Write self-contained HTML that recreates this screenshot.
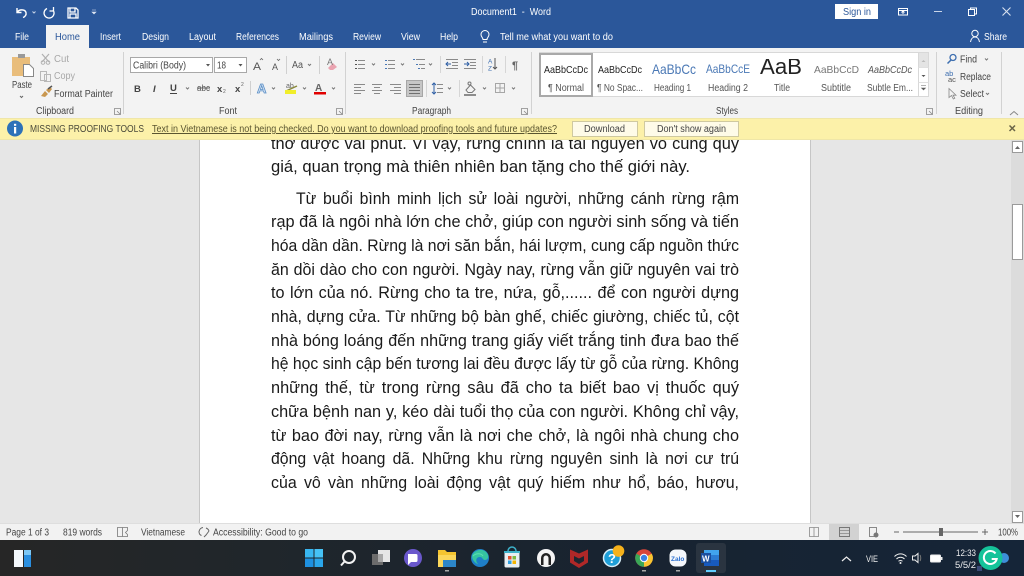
<!DOCTYPE html>
<html><head><meta charset="utf-8"><title>Document1 - Word</title>
<style>
html,body{margin:0;padding:0;width:1024px;height:576px;overflow:hidden;background:#e6e6e6}
svg{display:block;position:absolute;left:0;top:0;filter:blur(.35px)}
text{font-family:"Liberation Sans",sans-serif;white-space:pre}
.d{font-size:17px;fill:#1a1a1a}
.w{font-size:10px;fill:#fff}
.r{font-size:10px;fill:#444}
.g{font-size:10px;fill:#a8a8a8}
.s{font-size:10px;fill:#555}
.st{font-size:10px;fill:#444}
</style></head><body>
<svg width="1024" height="576" viewBox="0 0 1024 576" xmlns="http://www.w3.org/2000/svg">
<rect width="1024" height="576" fill="#e6e6e6"/>
<!-- page -->
<rect x="200" y="130" width="610" height="394" fill="#fff"/>
<path d="M199.500 130V524M810.500 130V524" stroke="#c6c6c6"/>
<text class="d" x="271" y="149" textLength="468" lengthAdjust="spacingAndGlyphs" word-spacing=".5">thơ được vài phút. Vì vậy, rừng chính là tài nguyên vô cùng quý</text>
<text class="d" x="271" y="172" textLength="419" lengthAdjust="spacingAndGlyphs">giá, quan trọng mà thiên nhiên ban tặng cho thế giới này.</text>
<text class="d" x="296" y="204" textLength="443" lengthAdjust="spacingAndGlyphs" word-spacing="2.500">Từ buổi bình minh lịch sử loài người, những cánh rừng rậm</text>
<text class="d" x="271" y="227" textLength="468" lengthAdjust="spacingAndGlyphs">rạp đã là ngôi nhà lớn che chở, giúp con người sinh sống và tiến</text>
<text class="d" x="271" y="251" textLength="468" lengthAdjust="spacingAndGlyphs">hóa dần dần. Rừng là nơi săn bắn, hái lượm, cung cấp nguồn thức</text>
<text class="d" x="271" y="275" textLength="468" lengthAdjust="spacingAndGlyphs" word-spacing=".5">ăn dồi dào cho con người. Ngày nay, rừng vẫn giữ nguyên vai trò</text>
<text class="d" x="271" y="298" textLength="468" lengthAdjust="spacingAndGlyphs" word-spacing="1">to lớn của nó. Rừng cho ta tre, nứa, gỗ,...... để con người dựng</text>
<text class="d" x="271" y="322" textLength="468" lengthAdjust="spacingAndGlyphs" word-spacing=".5">nhà, dựng cửa. Từ những bộ bàn ghế, chiếc giường, chiếc tủ, cột</text>
<text class="d" x="271" y="346" textLength="468" lengthAdjust="spacingAndGlyphs" word-spacing=".5">nhà bóng loáng đến những trang giấy viết trắng tinh đưa bao thế</text>
<text class="d" x="271" y="369" textLength="468" lengthAdjust="spacingAndGlyphs">hệ học sinh cập bến tương lai đều được lấy từ gỗ của rừng. Không</text>
<text class="d" x="271" y="393" textLength="468" lengthAdjust="spacingAndGlyphs" word-spacing="2.500">những thế, từ trong rừng sâu đã cho ta biết bao vị thuốc quý</text>
<text class="d" x="271" y="417" textLength="468" lengthAdjust="spacingAndGlyphs" word-spacing=".3">chữa bệnh nan y, kéo dài tuổi thọ của con người. Không chỉ vậy,</text>
<text class="d" x="271" y="441" textLength="468" lengthAdjust="spacingAndGlyphs" word-spacing="1">từ bao đời nay, rừng vẫn là nơi che chở, là ngôi nhà chung cho</text>
<text class="d" x="271" y="464" textLength="468" lengthAdjust="spacingAndGlyphs" word-spacing="3">động vật hoang dã. Những khu rừng nguyên sinh là nơi cư trú</text>
<text class="d" x="271" y="488" textLength="468" lengthAdjust="spacingAndGlyphs" word-spacing="3">của vô vàn những loài động vật quý hiếm như hổ, báo, hươu,</text>
<!-- scrollbar -->
<rect x="1011" y="140" width="13" height="384" fill="#dcdcdc"/>
<rect x="1012.500" y="141.500" width="10" height="11" fill="#fff" stroke="#9a9a9a"/>
<path d="M1015 149l2.500-3 2.500 3z" fill="#666"/>
<rect x="1012.500" y="204.500" width="10" height="55" fill="#fff" stroke="#9a9a9a"/>
<rect x="1012.500" y="511.500" width="10" height="11" fill="#fff" stroke="#9a9a9a"/>
<path d="M1015 515l2.500 3 2.500-3z" fill="#666"/>

<!-- title bar -->
<rect width="1024" height="48" fill="#2b579a"/>
<path d="M17 8v4.500h4.500M17 12.500c2-3.500 8-3.500 9 0 .6 2.400-1 4.300-3 5" fill="none" stroke="#fff" stroke-width="1.400"/>
<path d="M32.500 11.500l1.500 1.500 1.500-1.500" fill="none" stroke="#c9d5e8"/>
<path d="M47 8.500a5 5 0 1 0 6 1.500M53.500 7v4h-4" fill="none" stroke="#fff" stroke-width="1.300"/>
<path d="M68 8h8l2 2v8h-10zM70 8v4h5V8M70 18v-4h6v4" fill="none" stroke="#fff" stroke-width="1.300"/>
<path d="M92 10h4M92 12h4l-2 2z" fill="#dfe6f2" stroke="#dfe6f2" stroke-width=".6"/>
<text x="471" y="15" class="w" textLength="80" lengthAdjust="spacingAndGlyphs">Document1  -  Word</text>
<rect x="835" y="4" width="43" height="15" fill="#fff"/>
<text x="843" y="15" font-size="10" fill="#2b579a" textLength="28" lengthAdjust="spacingAndGlyphs">Sign in</text>
<path d="M898.500 8.500h9v6.500h-9zM898.500 10.500h9M903 14v-3M901.500 12.500l1.500-1.500 1.500 1.500" fill="none" stroke="#fff"/>
<path d="M934 11.500h8" stroke="#c9d5e8"/>
<path d="M968.500 9.500h6v6h-6zM970.500 9.500v-1.500h6v6h-1.500" fill="none" stroke="#fff"/>
<path d="M1002.500 7.500l8 8M1010.500 7.500l-8 8" stroke="#d8e1ef" stroke-width="1.100"/>
<!-- tabs -->
<rect x="46" y="25" width="43" height="23" fill="#f3f3f3"/>
<text x="15" y="40" class="w" textLength="14" lengthAdjust="spacingAndGlyphs">File</text>
<text x="55" y="40" font-size="10" fill="#2b579a" textLength="25" lengthAdjust="spacingAndGlyphs">Home</text>
<text x="100" y="40" class="w" textLength="21" lengthAdjust="spacingAndGlyphs">Insert</text>
<text x="142" y="40" class="w" textLength="27" lengthAdjust="spacingAndGlyphs">Design</text>
<text x="189" y="40" class="w" textLength="27" lengthAdjust="spacingAndGlyphs">Layout</text>
<text x="236" y="40" class="w" textLength="43" lengthAdjust="spacingAndGlyphs">References</text>
<text x="299" y="40" class="w" textLength="34" lengthAdjust="spacingAndGlyphs">Mailings</text>
<text x="353" y="40" class="w" textLength="28" lengthAdjust="spacingAndGlyphs">Review</text>
<text x="401" y="40" class="w" textLength="19" lengthAdjust="spacingAndGlyphs">View</text>
<text x="440" y="40" class="w" textLength="18" lengthAdjust="spacingAndGlyphs">Help</text>
<path d="M483 42h4M483 39.500c0-2-2-2.500-2-5a4 4 0 0 1 8 0c0 2.500-2 3-2 5z" fill="none" stroke="#fff"/>
<text x="500" y="40" class="w" textLength="113" lengthAdjust="spacingAndGlyphs">Tell me what you want to do</text>
<circle cx="975" cy="33.500" r="3.200" fill="none" stroke="#fff"/>
<path d="M970.500 42c.5-3.500 2.500-5 4.500-5s4 1.500 4.500 5" fill="none" stroke="#fff"/>
<text x="984" y="40" class="w" textLength="23" lengthAdjust="spacingAndGlyphs">Share</text>

<!-- ribbon -->
<rect y="48" width="1024" height="70" fill="#f3f3f3"/>
<path d="M123.500 52V114M345.500 52V114M531.500 52V114M936.500 52V114M1001.500 52V114" stroke="#d2d2d2"/>
<!-- clipboard -->
<rect x="12" y="57" width="18" height="19" fill="#e9bd7b"/>
<rect x="18" y="54" width="7" height="4" fill="#999"/>
<path d="M23.500 64.500h6l4 4v8h-10z" fill="#fff" stroke="#888"/>
<text x="12" y="88" class="r" textLength="20" lengthAdjust="spacingAndGlyphs">Paste</text>
<path d="M20 96l1.500 1.500 1.500-1.500" fill="none" stroke="#666"/>
<path d="M42 54l7 8M49 54l-7 8" stroke="#b0b0b0" stroke-width="1.200"/><circle cx="43" cy="62.500" r="1.800" fill="none" stroke="#b0b0b0"/><circle cx="48" cy="62.500" r="1.800" fill="none" stroke="#b0b0b0"/>
<text x="54" y="62" class="g" textLength="15" lengthAdjust="spacingAndGlyphs">Cut</text>
<path d="M40.500 71.500h6v9h-6zM44.500 74.500h6v7h-6z" fill="#f3f3f3" stroke="#b8b8b8"/>
<text x="54" y="79" class="g" textLength="21" lengthAdjust="spacingAndGlyphs">Copy</text>
<path d="M41 96l4-5 3 3-3 3zM46 90l4-3 2 2-3 4z" fill="#c9974f"/><path d="M48 89l4-3" stroke="#555" stroke-width="1.500"/>
<text x="54" y="97" class="r" textLength="59" lengthAdjust="spacingAndGlyphs">Format Painter</text>
<text x="36" y="114" class="r" textLength="38" lengthAdjust="spacingAndGlyphs">Clipboard</text>
<path d="M114.500 108.500h6v6h-6zM117 111l3 3" fill="none" stroke="#888" stroke-width=".8"/>
<!-- font -->
<rect x="130.500" y="57.500" width="82" height="15" fill="#fff" stroke="#a8a8a8"/>
<text x="133" y="68.500" class="r" textLength="53" lengthAdjust="spacingAndGlyphs">Calibri (Body)</text>
<path d="M206 64h4l-2 2.500z" fill="#555"/>
<rect x="214.500" y="57.500" width="32" height="15" fill="#fff" stroke="#a8a8a8"/>
<text x="217" y="68.500" class="r" textLength="9" lengthAdjust="spacingAndGlyphs">18</text>
<path d="M238.500 64h4l-2 2.500z" fill="#555"/>
<text x="253" y="70" font-size="11" fill="#555" textLength="8" lengthAdjust="spacingAndGlyphs">A</text><path d="M260 60l1.500-1.500 1.500 1.500" fill="none" stroke="#666" stroke-width=".8"/>
<text x="272" y="70" font-size="9" fill="#555" textLength="6" lengthAdjust="spacingAndGlyphs">A</text><path d="M277 59l1.500 1.500 1.500-1.500" fill="none" stroke="#666" stroke-width=".8"/>
<path d="M286.500 56V74" stroke="#d0d0d0"/>
<text x="292" y="68" font-size="10" fill="#555" textLength="11" lengthAdjust="spacingAndGlyphs">Aa</text>
<path d="M308 64l1.500 1.500 1.500-1.500" fill="none" stroke="#777"/>
<path d="M319.500 56V74" stroke="#d0d0d0"/>
<path d="M328 68l5-5 4 4-4 3h-3z" fill="#eaa3b0"/><text x="327" y="65" font-size="9" fill="#777">A</text>
<text x="134" y="92" font-size="9.500" font-weight="bold" fill="#444">B</text>
<text x="153" y="92" font-size="9.500" font-style="italic" font-weight="bold" font-family="Liberation Serif" fill="#444">I</text>
<text x="170" y="91" font-size="9.500" font-weight="bold" fill="#444">U</text><path d="M170 93.500h7" stroke="#444"/>
<path d="M186 87.500l1.500 1.500 1.500-1.500" fill="none" stroke="#777"/>
<text x="197" y="91" font-size="9" fill="#555" textLength="13" lengthAdjust="spacingAndGlyphs">abc</text><path d="M197 88h13" stroke="#666"/>
<text x="217" y="92" font-size="9.500" font-weight="bold" fill="#444">x</text><text x="223" y="93" font-size="5" fill="#666">2</text>
<text x="235" y="92" font-size="9.500" font-weight="bold" fill="#444">x</text><text x="241" y="86" font-size="5" fill="#666">2</text>
<path d="M250.500 81V95" stroke="#d0d0d0"/>
<text x="257" y="93" font-size="13" font-weight="bold" fill="#d5e3f2" stroke="#5b8fc7" stroke-width=".8">A</text>
<path d="M272 87.500l1.500 1.500 1.500-1.500" fill="none" stroke="#777"/>
<text x="286" y="88" font-size="7" fill="#666">ab</text><path d="M286 91l11-5" stroke="#8a8a3a" stroke-width="1.500"/><rect x="285" y="90" width="11" height="4" fill="#f1ee2a"/>
<path d="M303 87.500l1.500 1.500 1.500-1.500" fill="none" stroke="#777"/>
<text x="315" y="91" font-size="10" fill="#666" font-weight="bold">A</text><rect x="314" y="92" width="12" height="2.500" fill="#e00000"/>
<path d="M332 87.500l1.500 1.500 1.500-1.500" fill="none" stroke="#777"/>
<text x="219" y="114" class="r" textLength="18" lengthAdjust="spacingAndGlyphs">Font</text>
<path d="M336.500 108.500h6v6h-6zM339 111l3 3" fill="none" stroke="#888" stroke-width=".8"/>
<!-- paragraph -->
<g fill="none" stroke="#8a8a8a">
<!-- bullets -->
<path d="M358 60.500h7M358 64.500h7M358 68.500h7"/>
<path d="M355 60.500h2M355 64.500h2M355 68.500h2" stroke="#555"/>
<path d="M372 63.500l1.500 1.500 1.500-1.500" stroke="#777"/>
<!-- numbering -->
<path d="M388 60.500h7M388 64.500h7M388 68.500h7"/>
<path d="M385 60.500h2M385 64.500h2M385 68.500h2" stroke="#4a78b5"/>
<path d="M401 63.500l1.500 1.500 1.500-1.500" stroke="#777"/>
<!-- multilevel -->
<path d="M416 59.500h9M419 64.500h6M421 68.500h4"/>
<path d="M413 59.500h2M416 64.500h2M418 68.500h2" stroke="#4a78b5"/>
<path d="M429 63.500l1.500 1.500 1.500-1.500" stroke="#777"/>
<!-- indents -->
<path d="M446 59.500h12M452 62.500h6M452 65.500h6M446 68.500h12"/>
<path d="M451 64h-5M448 62l-2 2 2 2" stroke="#2f5fa5"/>
<path d="M464 59.500h12M470 62.500h6M470 65.500h6M464 68.500h12"/>
<path d="M464 64h5M467 62l2 2-2 2" stroke="#2f5fa5"/>
<!-- aligns -->
<path d="M354 84.500h11M354 87.500h7M354 90.500h11M354 93.500h7"/>
<path d="M372 84.500h10M374 87.500h6M372 90.500h10M374 93.500h6"/>
<path d="M390 84.500h11M394 87.500h7M390 90.500h11M394 93.500h7"/>
<!-- line spacing -->
<path d="M437 84.500h6M437 88.500h6M437 92.500h6"/>
<path d="M434 83v11M432 85l2-2 2 2M432 92l2 2 2-2" stroke="#2f5fa5"/>
<path d="M448 87.500l1.500 1.500 1.500-1.500" stroke="#777"/>
<!-- shading, borders -->
<path d="M466 90l4.500-5 4.500 4.500-3 3h-4z" stroke="#777" fill="#f3f3f3"/>
<circle cx="469.500" cy="83.500" r="1.500" stroke="#777"/>
<path d="M483 87.500l1.500 1.500 1.500-1.500" stroke="#777"/>
<path d="M495.500 83.500h9v9h-9zM500 83.500v9M495.500 88h9" stroke="#a6a6a6"/>
<path d="M512 87.500l1.500 1.500 1.500-1.500" stroke="#777"/>
<!-- seps -->
<path d="M440.500 56V73M482.500 56V73M505.500 56V73M426.500 80V97M459.500 80V97" stroke="#d6d6d6"/>
<!-- sort -->
<path d="M495 58v11M493 67l2 2 2-2" stroke="#555"/>
</g>
<rect x="464" y="94" width="12" height="2" fill="#8c8c8c"/>
<rect x="406.500" y="80.500" width="16" height="16" fill="#c6c6c6" stroke="#a6a6a6"/>
<path d="M409 84.500h11M409 87.500h11M409 90.500h11M409 93.500h11" stroke="#707070"/>
<text x="488" y="63.500" font-size="6.500" fill="#3e6fb0">A</text><text x="488" y="70.500" font-size="6.500" fill="#3e6fb0">Z</text>
<text x="512" y="69" font-size="11" fill="#666" font-weight="bold">¶</text>
<text x="412" y="114" class="r" textLength="39" lengthAdjust="spacingAndGlyphs">Paragraph</text>
<path d="M521.500 108.500h6v6h-6zM524 111l3 3" fill="none" stroke="#888" stroke-width=".8"/>
<!-- styles -->
<rect x="539.500" y="52.500" width="389" height="44" fill="#fff" stroke="#d8d8d8"/>
<rect x="540" y="54" width="52" height="42" fill="#fff" stroke="#a9a9a9" stroke-width="2"/>
<text x="544" y="73" font-size="10.500" fill="#222" textLength="44" lengthAdjust="spacingAndGlyphs">AaBbCcDc</text>
<text x="548" y="91" class="s" textLength="36" lengthAdjust="spacingAndGlyphs">¶ Normal</text>
<text x="598" y="73" font-size="10.500" fill="#222" textLength="44" lengthAdjust="spacingAndGlyphs">AaBbCcDc</text>
<text x="597" y="91" class="s" textLength="46" lengthAdjust="spacingAndGlyphs">¶ No Spac...</text>
<text x="652" y="74" font-size="14" fill="#4a78b5" textLength="44" lengthAdjust="spacingAndGlyphs">AaBbCc</text>
<text x="654" y="91" class="s" textLength="37" lengthAdjust="spacingAndGlyphs">Heading 1</text>
<text x="706" y="73" font-size="12" fill="#4a78b5" textLength="44" lengthAdjust="spacingAndGlyphs">AaBbCcE</text>
<text x="708" y="91" class="s" textLength="40" lengthAdjust="spacingAndGlyphs">Heading 2</text>
<text x="760" y="74" font-size="22" fill="#222" textLength="42" lengthAdjust="spacingAndGlyphs">AaB</text>
<rect x="755" y="53" width="50" height="6" fill="#fff"/>
<text x="774" y="91" class="s" textLength="16" lengthAdjust="spacingAndGlyphs">Title</text>
<text x="814" y="73" font-size="10.500" fill="#777" textLength="45" lengthAdjust="spacingAndGlyphs">AaBbCcD</text>
<text x="821" y="91" class="s" textLength="30" lengthAdjust="spacingAndGlyphs">Subtitle</text>
<text x="868" y="73" font-size="10.500" font-style="italic" fill="#555" textLength="44" lengthAdjust="spacingAndGlyphs">AaBbCcDc</text>
<text x="867" y="91" class="s" textLength="46" lengthAdjust="spacingAndGlyphs">Subtle Em...</text>
<rect x="918.500" y="52.500" width="10" height="44" fill="#fff" stroke="#d8d8d8"/>
<rect x="919" y="53" width="9" height="14" fill="#e4e4e4"/>
<path d="M921.500 62l2-2 2 2z" fill="#bbb"/><path d="M921.500 75l2 2 2-2z" fill="#555"/>
<path d="M921 85.500h5M921.500 88l2 2 2-2z" stroke="#666" fill="#555" stroke-width=".6"/>
<path d="M918.500 67.500h10M918.500 82.500h10" stroke="#e0e0e0"/>
<text x="716" y="114" class="r" textLength="22" lengthAdjust="spacingAndGlyphs">Styles</text>
<path d="M926.500 108.500h6v6h-6zM929 111l3 3" fill="none" stroke="#888" stroke-width=".8"/>
<!-- editing -->
<circle cx="953" cy="57.500" r="3" fill="none" stroke="#3e6fb0" stroke-width="1.300"/><path d="M951 60l-3.500 3.500" stroke="#3e6fb0" stroke-width="1.500"/>
<text x="960" y="62.500" class="r" textLength="17" lengthAdjust="spacingAndGlyphs">Find</text>
<path d="M985 58.500l1.500 1.500 1.500-1.500" fill="none" stroke="#777"/>
<text x="945" y="76" font-size="7.500" fill="#3e6fb0">ab</text><text x="948" y="82" font-size="7.500" fill="#555">ac</text>
<text x="960" y="80" class="r" textLength="31" lengthAdjust="spacingAndGlyphs">Replace</text>
<path d="M949 88.500v9l2.500-2 1.800 3.500 1.500-.8-1.800-3h3z" fill="#f3f3f3" stroke="#888" stroke-width=".8"/>
<text x="960" y="97" class="r" textLength="24" lengthAdjust="spacingAndGlyphs">Select</text>
<path d="M986 93l1.500 1.500 1.500-1.500" fill="none" stroke="#777"/>
<text x="955" y="114" class="r" textLength="28" lengthAdjust="spacingAndGlyphs">Editing</text>
<path d="M1010 115l4-3.500 4 3.500" fill="none" stroke="#888"/>

<!-- message bar -->
<rect y="118" width="1024" height="22" fill="#fcf1a9"/>
<path d="M0 118.500h1024M0 139.500h1024" stroke="#efe6a8"/>
<circle cx="15" cy="128.500" r="8" fill="#2e72b8"/>
<rect x="14" y="127" width="2.200" height="6.500" fill="#fff"/><rect x="14" y="123.800" width="2.200" height="2" fill="#fff"/>
<text x="30" y="132" font-size="10" fill="#4a4a3a" textLength="114" lengthAdjust="spacingAndGlyphs">MISSING PROOFING TOOLS</text>
<text x="152" y="132" font-size="10" fill="#5a5530" text-decoration="underline" textLength="405" lengthAdjust="spacingAndGlyphs">Text in Vietnamese is not being checked. Do you want to download proofing tools and future updates?</text>
<rect x="572.500" y="121.500" width="65" height="15" fill="#fefbe8" stroke="#cfc9a0"/>
<text x="584" y="132" class="r" textLength="41" lengthAdjust="spacingAndGlyphs">Download</text>
<rect x="644.500" y="121.500" width="94" height="15" fill="#fefbe8" stroke="#cfc9a0"/>
<text x="657" y="132" class="r" textLength="69" lengthAdjust="spacingAndGlyphs">Don't show again</text>
<path d="M1009.500 125.500l5.500 5.500M1015 125.500l-5.500 5.500" stroke="#6b6648" stroke-width="1.500"/>

<!-- status bar -->
<rect y="524" width="1024" height="16" fill="#f2f2f2"/>
<path d="M0 523.500h1024" stroke="#dedede"/>
<text x="6" y="535.500" class="st" textLength="43" lengthAdjust="spacingAndGlyphs">Page 1 of 3</text>
<text x="63" y="535.500" class="st" textLength="39" lengthAdjust="spacingAndGlyphs">819 words</text>
<path d="M117.500 527.500h5v9h-5zM122.500 527.500h5v3l-2 2 2 2v2h-5" fill="none" stroke="#777" stroke-width=".8"/>
<text x="141" y="535.500" class="st" textLength="44" lengthAdjust="spacingAndGlyphs">Vietnamese</text>
<path d="M203 527.500a5 5 0 0 0-4 4c0 2 1 3.500 2.500 4M206 528a5 5 0 0 1 3 3M204 537l2-2 3-4" fill="none" stroke="#666"/>
<text x="213" y="535.500" class="st" textLength="95" lengthAdjust="spacingAndGlyphs">Accessibility: Good to go</text>
<path d="M809.500 527.500h4.500v9h-4.500zM814 527.500h4.500v9H814z" fill="none" stroke="#888" stroke-width=".8"/>
<rect x="829" y="524" width="30" height="16" fill="#d2d2d2"/>
<rect x="839.500" y="527.500" width="10" height="9" fill="none" stroke="#777"/><path d="M840 530.500h9M840 533.500h9" stroke="#999"/>
<path d="M869.500 527.500h7v9h-7z" fill="none" stroke="#888"/><circle cx="876" cy="535" r="2.500" fill="#777"/>
<path d="M894 532h5M903 532h75M982 532h6M985 529v6" stroke="#666"/>
<rect x="939" y="528" width="4" height="8" fill="#666"/>
<text x="998" y="535.500" class="st" textLength="20" lengthAdjust="spacingAndGlyphs">100%</text>

<!-- taskbar -->
<defs><linearGradient id="tb" x1="0" x2="1" y1="0" y2="0"><stop offset="0" stop-color="#262626"/><stop offset=".25" stop-color="#20262b"/><stop offset=".6" stop-color="#182330"/><stop offset="1" stop-color="#152538"/></linearGradient></defs>
<rect y="540" width="1024" height="36" fill="url(#tb)"/>
<!-- widgets -->
<rect x="14" y="550" width="9" height="17" fill="#f4f8fc"/>
<rect x="24" y="550" width="7" height="17" fill="#2a8fe0"/><rect x="24" y="550" width="7" height="5" fill="#7cc7f5"/>
<!-- start -->
<g><rect x="305" y="549" width="8.500" height="8.500" fill="#38b6f0"/><rect x="314.500" y="549" width="8.500" height="8.500" fill="#46c2f5"/><rect x="305" y="558.500" width="8.500" height="8.500" fill="#1e90e0"/><rect x="314.500" y="558.500" width="8.500" height="8.500" fill="#2aa6ea"/></g>
<!-- search -->
<circle cx="349" cy="557" r="6" fill="none" stroke="#f2f2f2" stroke-width="2"/><path d="M344.500 561.500l-3.500 4" stroke="#f2f2f2" stroke-width="2"/>
<!-- task view -->
<rect x="372" y="554" width="11" height="11" fill="#6c6c6c"/><rect x="378" y="550" width="12" height="12" fill="#e6e6e6"/><rect x="378" y="554" width="5" height="8" fill="#a8a8a8"/>
<!-- chat -->
<circle cx="413" cy="558" r="9" fill="#6a58cc"/><path d="M408 554h8a1.500 1.500 0 0 1 1.500 1.500v5a1.500 1.500 0 0 1-1.500 1.500h-5l-3 3z" fill="#fff"/>
<!-- explorer -->
<path d="M438 550h7l2 2h9v15h-18z" fill="#f4c430"/><rect x="438" y="555" width="18" height="12" fill="#fbd75b"/><rect x="443" y="560" width="13" height="7" fill="#2c86c9"/>
<rect x="445" y="570" width="4" height="1.500" fill="#a8a8a8"/>
<!-- edge -->
<circle cx="480" cy="558" r="9" fill="#1e7fc9"/><path d="M472 556c2-7 13-9 16-1 1 3-1 5-3 5-3 0-2-3-5-3-4 0-5 4-2 7 1 1-6-2-6-8z" fill="#35c4a0"/><path d="M473 556c3-3 8-3 10 0" stroke="#5de0b0" fill="none"/>
<!-- store -->
<path d="M504.500 552h15v14a1.500 1.500 0 0 1-1.500 1.500h-12a1.500 1.500 0 0 1-1.500-1.500z" fill="#e8eef2"/><path d="M508 552v-1a4 4 0 0 1 8 0v1" fill="none" stroke="#3db1c9" stroke-width="1.500"/><rect x="504" y="551" width="16" height="2" fill="#3db1c9"/>
<rect x="508" y="556" width="3.500" height="3.500" fill="#e5502e"/><rect x="512.500" y="556" width="3.500" height="3.500" fill="#7ebb42"/><rect x="508" y="560.500" width="3.500" height="3.500" fill="#2f9fe0"/><rect x="512.500" y="560.500" width="3.500" height="3.500" fill="#f4b400"/>
<!-- circle app -->
<circle cx="546" cy="558" r="9" fill="#f4f4f4"/><path d="M541 565v-7a5 5 0 0 1 10 0v7h-2.500v-7a2.500 2.500 0 0 0-5 0v7z" fill="#222"/>
<!-- mcafee -->
<path d="M570 549.500l9 4 9-4v13l-9 5.500-9-5.500z" fill="#b02828"/><path d="M574 556l5 2.500 5-2.500v5l-5 3-5-3z" fill="#1c2630"/>
<!-- help -->
<circle cx="612" cy="558" r="8.500" fill="#1f9fd8" stroke="#d8eef8" stroke-width="1.500"/><text x="608" y="563" font-size="13" font-weight="bold" fill="#fff">?</text>
<circle cx="618.500" cy="551" r="5.800" fill="#f6b21b"/>
<!-- chrome -->
<circle cx="644" cy="558" r="8.800" fill="#d9463a"/><path d="M644 558l-7.600-4.400A8.800 8.800 0 0 0 644 566.800z" fill="#3aa757"/><path d="M644 558v8.800A8.800 8.800 0 0 0 651.700 553.600z" fill="#f9c531"/><circle cx="644" cy="558" r="4.200" fill="#fff"/><circle cx="644" cy="558" r="3.200" fill="#3b82e5"/>
<rect x="642" y="570" width="4" height="1.500" fill="#a8a8a8"/>
<!-- zalo -->
<rect x="669.500" y="549.500" width="17" height="17" rx="6" fill="#f4f7fb"/><text x="671" y="561" font-size="6.500" font-weight="bold" fill="#2a6fd0">Zalo</text>
<rect x="676" y="570" width="4" height="1.500" fill="#a8a8a8"/>
<!-- word -->
<rect x="696" y="543" width="30" height="30" rx="3" fill="#2a3440"/>
<rect x="704" y="550" width="15" height="16" rx="1" fill="#2b7cd3"/><rect x="704" y="550" width="15" height="5" fill="#41a5ee"/><rect x="704" y="560" width="15" height="6" fill="#185abd"/>
<rect x="701" y="553" width="10" height="10" fill="#1a4f9f"/><text x="702" y="561.500" font-size="8" font-weight="bold" fill="#fff">W</text>
<rect x="706" y="570" width="10" height="2" fill="#60cdff"/>
<!-- tray -->
<path d="M842 561l4.500-4 4.500 4" fill="none" stroke="#eee" stroke-width="1.200"/>
<text x="866" y="562" font-size="9" fill="#eee" textLength="12" lengthAdjust="spacingAndGlyphs">VIE</text>
<path d="M894.500 556.500c3.500-3.500 8.500-3.500 12 0M896.500 559c2.300-2.300 5.700-2.300 8 0M898.500 561.300c1.200-1 2.800-1 4 0" fill="none" stroke="#eee"/><circle cx="900.500" cy="563" r="1" fill="#eee"/>
<path d="M912.500 556h2.500l3-2.500v9l-3-2.500h-2.500z" fill="none" stroke="#eee"/><path d="M920 555c1 1.500 1 4.500 0 6" fill="none" stroke="#777"/>
<rect x="930.500" y="555" width="10" height="7" rx="1" fill="#fff" stroke="#eee"/><rect x="941" y="557" width="1.500" height="3" fill="#eee"/>
<text x="956" y="556" font-size="9.500" fill="#eee" textLength="20" lengthAdjust="spacingAndGlyphs">12:33</text>
<text x="955" y="568" font-size="9.500" fill="#eee" textLength="21" lengthAdjust="spacingAndGlyphs">5/5/2</text>
<circle cx="1004" cy="558" r="5" fill="#3d8fd8"/>
<rect x="977" y="566" width="5" height="5" fill="#3b4c78"/>
<circle cx="990.500" cy="558" r="12" fill="#15c39a"/>
<path d="M995.500 553.500a6.500 6.500 0 1 0 1.200 5.500h-5" fill="none" stroke="#fff" stroke-width="2"/>
</svg>
</body></html>
